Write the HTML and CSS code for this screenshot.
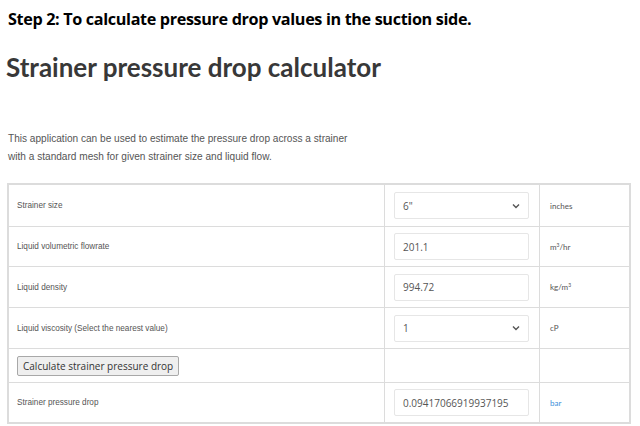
FILE: index.html
```html
<!DOCTYPE html>
<html>
<head>
<meta charset="utf-8">
<link rel="stylesheet" href="styles.css">
</head>
<body>
<div class="page">
  <h2 class="step">Step 2: To calculate pressure drop values in the suction side.</h2>
  <h1 class="title">Strainer pressure drop calculator</h1>
  <p class="intro">This application can be used to estimate the pressure drop across a strainer<br>with a standard mesh for given strainer size and liquid flow.</p>
  <table class="calc">
    <tr class="r1">
      <td class="label">Strainer size</td>
      <td class="field"><div class="select"><span>6"</span><svg class="chev" width="8" height="6" viewBox="0 0 8 6"><path d="M1 1.5 L4 4.5 L7 1.5" fill="none" stroke="#555" stroke-width="1.4"/></svg></div></td>
      <td class="unit">inches</td>
    </tr>
    <tr class="r2">
      <td class="label">Liquid volumetric flowrate</td>
      <td class="field"><div class="input">201.1</div></td>
      <td class="unit">m<sup>3</sup>/hr</td>
    </tr>
    <tr class="r3">
      <td class="label">Liquid density</td>
      <td class="field"><div class="input">994.72</div></td>
      <td class="unit">kg/m<sup>3</sup></td>
    </tr>
    <tr class="r4">
      <td class="label">Liquid viscosity (Select the nearest value)</td>
      <td class="field"><div class="select"><span>1</span><svg class="chev" width="8" height="6" viewBox="0 0 8 6"><path d="M1 1.5 L4 4.5 L7 1.5" fill="none" stroke="#555" stroke-width="1.4"/></svg></div></td>
      <td class="unit">cP</td>
    </tr>
    <tr class="r5">
      <td class="label btncell"><button class="btn">Calculate strainer pressure drop</button></td>
      <td class="field"></td>
      <td class="unit"></td>
    </tr>
    <tr class="r6">
      <td class="label">Strainer pressure drop</td>
      <td class="field"><div class="input">0.09417066919937195</div></td>
      <td class="unit blue">bar</td>
    </tr>
  </table>
</div>
</body>
</html>
```
FILE: styles.css
```css
html, body {
  margin: 0;
  padding: 0;
  background: #fff;
}
.page {
  width: 640px;
  height: 426px;
  overflow: hidden;
}
.step {
  margin: 0;
  padding: 7px 0 0 8px;
  font-family: "Open Sans", sans-serif;
  font-weight: 700;
  font-size: 16.2px;
  line-height: 24px;
  color: #000;
  letter-spacing: -0.35px;
}
.title {
  margin: 0;
  padding: 21px 0 0 6px;
  font-family: Lato, "Open Sans", sans-serif;
  font-weight: 700;
  font-size: 26px;
  line-height: 30px;
  color: #383838;
}
.intro {
  margin: 0;
  padding: 48px 0 0 8px;
  font-family: "Liberation Sans", Arial, sans-serif;
  font-size: 10.1px;
  line-height: 18px;
  color: #555;
}
.calc {
  margin: 17px 0 0 7px;
  width: 624px;
  border-collapse: collapse;
  border: 2px solid #dcdcdc;
}
.calc td {
  border: 1px solid #dcdcdc;
  padding: 0;
  vertical-align: middle;
}
.label {
  width: 367px;
  padding-left: 8px !important;
  font-family: "Liberation Sans", Arial, sans-serif;
  font-size: 8.2px;
  color: #555;
}
.field {
  width: 154px;
}
.unit {
  padding-left: 10px !important;
  font-family: Lato, "Open Sans", sans-serif;
  font-size: 8px;
  color: #555;
}
.unit sup {
  font-size: 5px;
  vertical-align: 3px;
}
.blue {
  color: #3a8fd9;
}
.r1 td { height: 41px; }
.r2 td { height: 39px; }
.r3 td { height: 40px; }
.r4 td { height: 40px; }
.r5 td { height: 33px; }
.r6 td { height: 39px; }
.input, .select {
  margin-left: 9px;
  width: 135px;
  height: 27px;
  box-sizing: border-box;
  border: 1px solid #e6e6e6;
  border-radius: 2px;
  padding-left: 8px;
  font-family: "Open Sans", sans-serif;
  font-size: 10px;
  color: #555;
  display: flex;
  align-items: center;
}
.select {
  justify-content: space-between;
  padding-right: 8px;
}
.btn {
  height: 20px;
  padding: 0 5px;
  font-family: "Open Sans", sans-serif;
  font-size: 10px;
  color: #333;
  background: #efefef;
  border: 1px solid #a8a8a8;
  border-radius: 2px;
}
.btncell {
  padding-left: 8px !important;
}
```
